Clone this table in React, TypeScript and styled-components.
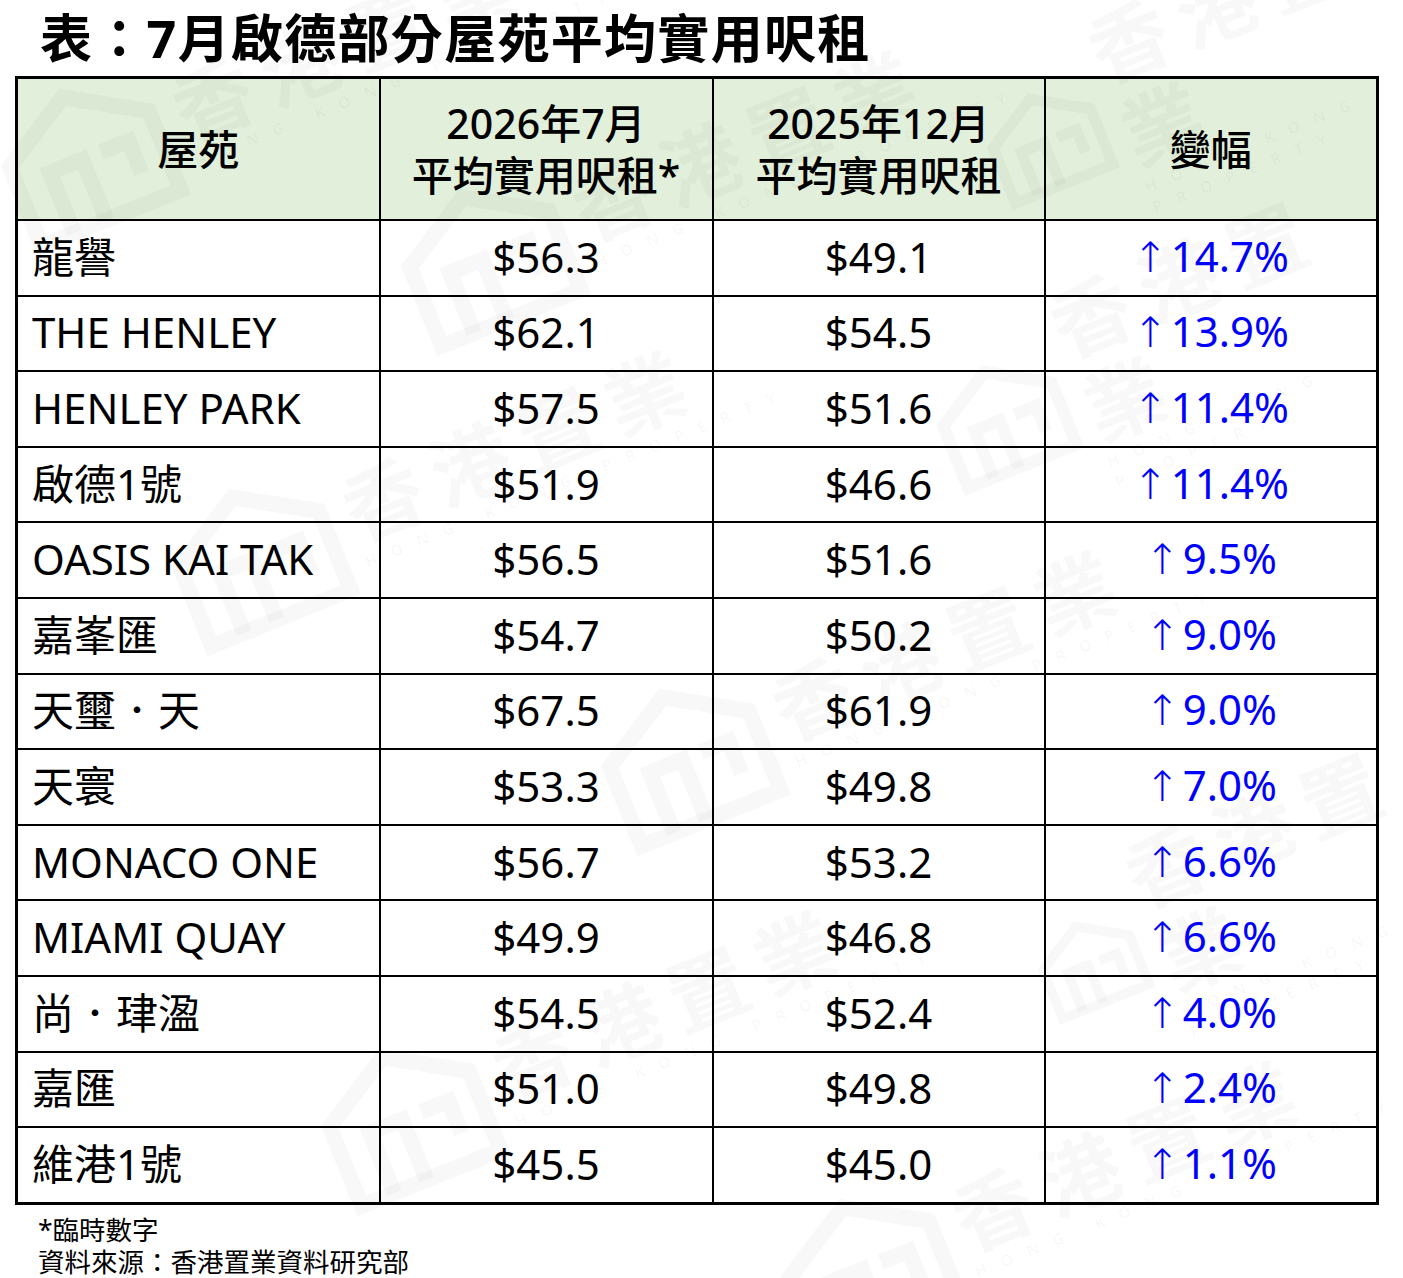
import React from "react";
import styled, { createGlobalStyle } from "styled-components";

const Global = createGlobalStyle`
  html, body { margin: 0; padding: 0; background: #fff; }
  body { font-family: "Noto Sans", "Noto Sans CJK TC", sans-serif; color: #000; }
`;

const Page = styled.div`
  position: relative;
  width: 1403px;
  height: 1278px;
  overflow: hidden;
  background: #fff;
`;

const Title = styled.h1`
  margin: 0;
  padding: 6px 0 4px 40px;
  font-family: "Noto Sans", "Noto Sans CJK TC", sans-serif;
  font-weight: 700;
  font-size: 52px;
  line-height: 64px;
  letter-spacing: 1.3px;
`;

const Table = styled.table`
  margin: 2px 0 0 15px;
  border-collapse: collapse;
  table-layout: fixed;
  width: 1361px;
  border: 3px solid #000;
`;

const HeadCell = styled.th`
  height: 140px;
  padding: 0;
  background: #e2efda;
  border: 2px solid #000;
  font-weight: 500;
  font-size: 41px;
  line-height: 52px;
  text-align: center;
  vertical-align: middle;
`;

const Cell = styled.td<{ $align?: "left" | "center"; $blue?: boolean }>`
  height: 71.6px;
  padding: 0 0 2px ${(p) => (p.$align === "left" ? "14px" : "0")};
  border: 2px solid #000;
  font-size: 42px;
  line-height: 50px;
  text-align: ${(p) => p.$align ?? "center"};
  vertical-align: middle;
  white-space: nowrap;
  color: ${(p) => (p.$blue ? "#0000ff" : "#000")};
`;

const Arrow = styled.span`
  font-family: "DejaVu Sans", sans-serif;
  font-weight: 300;
  margin-right: 3px;
`;

const Notes = styled.div`
  padding: 9px 0 0 38px;
  font-size: 26.5px;
  line-height: 32px;
  font-family: "Noto Sans", "Noto Sans CJK TC", sans-serif;
`;

const Overlay = styled.div`
  position: absolute;
  inset: 0;
  pointer-events: none;
`;

const Mark = styled.div`
  position: absolute;
  display: flex;
  align-items: center;
  gap: 14px;
  transform: rotate(-22deg);
  transform-origin: left top;
  color: rgba(0, 0, 0, 0.028);
`;

const MarkText = styled.div`
  display: flex;
  flex-direction: column;
`;

const MarkCn = styled.div`
  font-family: "Noto Sans CJK TC", sans-serif;
  font-weight: 700;
  font-size: 80px;
  line-height: 90px;
  letter-spacing: 14px;
`;

const MarkEn = styled.div`
  font-family: "Noto Sans", sans-serif;
  font-weight: 700;
  font-size: 16px;
  letter-spacing: 15px;
`;

const Logo = () => (
  <svg width="170" height="150" viewBox="0 0 170 150" fill="none" stroke="currentColor" strokeWidth="16">
    <path d="M10 140 V55 L85 10 L160 55 V140 Z" />
    <path d="M45 140 V75 H80 V140" />
    <path d="M100 75 H130 V110" />
  </svg>
);

const marks: { x: number; y: number }[] = [
  { x: -20, y: 120 },
  { x: 380, y: 220 },
  { x: 950, y: 60 },
  { x: 900, y: 340 },
  { x: 150, y: 520 },
  { x: 580, y: 720 },
  { x: 1000, y: 880 },
  { x: 300, y: 1080 },
  { x: 760, y: 1230 },
];

type Row = [string, string, string, string];
const rows: Row[] = [
  ["龍譽", "$56.3", "$49.1", "14.7%"],
  ["THE HENLEY", "$62.1", "$54.5", "13.9%"],
  ["HENLEY PARK", "$57.5", "$51.6", "11.4%"],
  ["啟德1號", "$51.9", "$46.6", "11.4%"],
  ["OASIS KAI TAK", "$56.5", "$51.6", "9.5%"],
  ["嘉峯匯", "$54.7", "$50.2", "9.0%"],
  ["天璽．天", "$67.5", "$61.9", "9.0%"],
  ["天寰", "$53.3", "$49.8", "7.0%"],
  ["MONACO ONE", "$56.7", "$53.2", "6.6%"],
  ["MIAMI QUAY", "$49.9", "$46.8", "6.6%"],
  ["尚．珒溋", "$54.5", "$52.4", "4.0%"],
  ["嘉匯", "$51.0", "$49.8", "2.4%"],
  ["維港1號", "$45.5", "$45.0", "1.1%"],
];

export default function App() {
  return (
    <Page>
      <Global />
      <Title>表：7月啟德部分屋苑平均實用呎租</Title>
      <Table>
        <colgroup>
          <col style={{ width: 363 }} />
          <col style={{ width: 333 }} />
          <col style={{ width: 332 }} />
          <col style={{ width: 333 }} />
        </colgroup>
        <thead>
          <tr>
            <HeadCell>屋苑</HeadCell>
            <HeadCell>
              2026年7月
              <br />
              平均實用呎租*
            </HeadCell>
            <HeadCell>
              2025年12月
              <br />
              平均實用呎租
            </HeadCell>
            <HeadCell>變幅</HeadCell>
          </tr>
        </thead>
        <tbody>
          {rows.map((r, i) => (
            <tr key={i}>
              <Cell $align="left">{r[0]}</Cell>
              <Cell>{r[1]}</Cell>
              <Cell>{r[2]}</Cell>
              <Cell $blue>
                <Arrow>↑</Arrow>
                {r[3]}
              </Cell>
            </tr>
          ))}
        </tbody>
      </Table>
      <Notes>
        *臨時數字
        <br />
        資料來源：香港置業資料研究部
      </Notes>
      <Overlay>
        {marks.map((m, i) => (
          <Mark key={i} style={{ left: m.x, top: m.y }}>
            <Logo />
            <MarkText>
              <MarkCn>香港置業</MarkCn>
              <MarkEn>HONG KONG PROPERTY</MarkEn>
            </MarkText>
          </Mark>
        ))}
      </Overlay>
    </Page>
  );
}
